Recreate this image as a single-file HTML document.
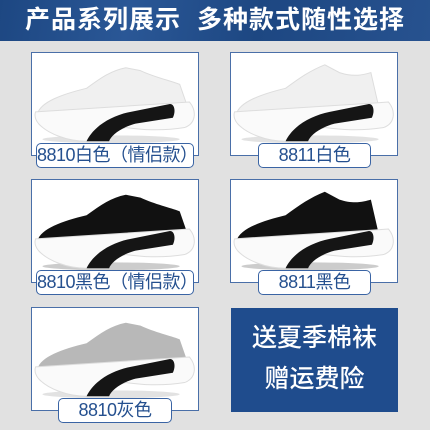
<!DOCTYPE html>
<html><head><meta charset="utf-8"><style>
*{margin:0;padding:0;box-sizing:border-box}
body{width:430px;height:430px;background:#e1e1e1;position:relative;overflow:hidden;font-family:"Liberation Sans","Noto Sans CJK SC",sans-serif}
.hd{position:absolute;left:0;top:0;width:430px;height:41px;background:linear-gradient(100deg,#1d4782 0%,#2a5796 30%,#1d4782 60%,#27528f 100%);color:#fff;font-weight:bold;font-size:25px;line-height:41px;text-align:center;letter-spacing:1px;white-space:nowrap}
.bx{position:absolute;width:168px;height:104px;background:#fff;border:1.5px solid #4a6fa8}
.bx svg{position:absolute;left:0;top:0}
.lb{position:absolute;height:25px;background:#fff;border:1.5px solid #3a64a4;border-radius:5px;color:#25508f;font-size:18px;line-height:22px;text-align:center;white-space:nowrap;overflow:hidden;letter-spacing:-0.5px}
.blue{position:absolute;left:231px;top:308px;width:167px;height:104px;background:#1f4c8d;color:#fff;font-size:25px;text-align:center;line-height:41px;padding-top:10px;font-weight:500}
</style></head><body>
<div class="hd">产品系列展示&nbsp;&nbsp;多种款式随性选择</div>

<div class="bx" style="left:31px;top:52px"><svg width="166" height="102" viewBox="0 0 168 104">
<ellipse cx="80" cy="88" rx="70" ry="4" fill="#e2e2e2"/>
<path d="M5,62 C8,50 30,42 55,36 C70,25 80,18 95,15 L110,18 C125,25 140,28 150,32 L158,55 L60,62 Z" fill="#f0f0f0" stroke="#ddd"/>
<path d="M3,60 L160,50 C168,60 166,72 155,76 C130,80 110,78 95,76 C80,80 70,88 55,90 C35,90 15,82 6,72 C2,67 2,63 3,60 Z" fill="#fafafa" stroke="#ddd"/>
<path d="M55,90 C62,75 80,64 100,60 L140,52 C145,52 146,60 143,66 L105,72 C90,76 80,84 78,90 Z" fill="#151515"/></svg></div>
<div class="lb" style="left:36px;top:143px;width:158px">8810白色（情侣款）</div>

<div class="bx" style="left:230px;top:52px"><svg width="166" height="102" viewBox="0 0 168 104">
<ellipse cx="80" cy="88" rx="70" ry="4" fill="#e2e2e2"/>
<path d="M5,62 C8,50 30,42 55,36 C70,25 80,18 95,12 L110,20 C125,25 135,22 142,20 L150,55 L60,62 Z" fill="#f0f0f0" stroke="#ddd"/>
<path d="M3,60 L160,50 C168,60 166,72 155,76 C130,80 110,78 95,76 C80,80 70,88 55,90 C35,90 15,82 6,72 C2,67 2,63 3,60 Z" fill="#fafafa" stroke="#ddd"/>
<path d="M55,90 C62,75 80,64 100,60 L140,52 C145,52 146,60 143,66 L105,72 C90,76 80,84 78,90 Z" fill="#151515"/></svg></div>
<div class="lb" style="left:258px;top:143px;width:113px">8811白色</div>

<div class="bx" style="left:31px;top:179px"><svg width="166" height="102" viewBox="0 0 168 104">
<ellipse cx="80" cy="88" rx="70" ry="4" fill="#ccc"/>
<path d="M5,62 C8,50 30,42 55,36 C70,25 80,18 95,15 L110,18 C125,25 140,28 150,32 L158,55 L60,62 Z" fill="#111"/>
<path d="M3,60 L160,50 C168,60 166,72 155,76 C130,80 110,78 95,76 C80,80 70,88 55,90 C35,90 15,82 6,72 C2,67 2,63 3,60 Z" fill="#fafafa" stroke="#ddd"/>
<path d="M55,90 C62,75 80,64 100,60 L140,52 C145,52 146,60 143,66 L105,72 C90,76 80,84 78,90 Z" fill="#151515"/></svg></div>
<div class="lb" style="left:36px;top:270px;width:158px">8810黑色（情侣款）</div>

<div class="bx" style="left:230px;top:179px"><svg width="166" height="102" viewBox="0 0 168 104">
<ellipse cx="80" cy="88" rx="70" ry="4" fill="#ccc"/>
<path d="M5,62 C8,50 30,42 55,36 C70,25 80,18 95,12 L110,20 C125,25 135,22 142,20 L150,55 L60,62 Z" fill="#111"/>
<path d="M3,60 L160,50 C168,60 166,72 155,76 C130,80 110,78 95,76 C80,80 70,88 55,90 C35,90 15,82 6,72 C2,67 2,63 3,60 Z" fill="#fafafa" stroke="#ddd"/>
<path d="M55,90 C62,75 80,64 100,60 L140,52 C145,52 146,60 143,66 L105,72 C90,76 80,84 78,90 Z" fill="#151515"/></svg></div>
<div class="lb" style="left:258px;top:270px;width:113px">8811黑色</div>

<div class="bx" style="left:31px;top:307px"><svg width="166" height="102" viewBox="0 0 168 104">
<ellipse cx="80" cy="88" rx="70" ry="4" fill="#e2e2e2"/>
<path d="M5,62 C8,50 30,42 55,36 C70,25 80,18 95,15 L110,18 C125,25 140,28 150,32 L158,55 L60,62 Z" fill="#b8b8b8"/>
<path d="M3,60 L160,50 C168,60 166,72 155,76 C130,80 110,78 95,76 C80,80 70,88 55,90 C35,90 15,82 6,72 C2,67 2,63 3,60 Z" fill="#fafafa" stroke="#ddd"/>
<path d="M55,90 C62,75 80,64 100,60 L140,52 C145,52 146,60 143,66 L105,72 C90,76 80,84 78,90 Z" fill="#151515"/></svg></div>
<div class="lb" style="left:58px;top:398px;width:114px">8810灰色</div>

<div class="blue">送夏季棉袜<br>赠运费险</div>
</body></html>
